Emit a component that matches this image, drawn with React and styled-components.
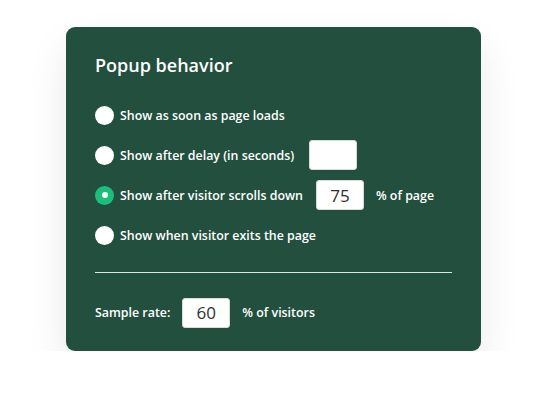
import React from "react";
import styled, { createGlobalStyle } from "styled-components";

const GlobalStyle = createGlobalStyle`
  body {
    margin: 0;
    background: #ffffff;
    font-family: "Open Sans", "Liberation Sans", sans-serif;
  }
`;

const Page = styled.div`
  padding: 27px 0 0 66px;
`;

const Card = styled.div`
  width: 415px;
  box-sizing: border-box;
  padding: 26px 29px 23px;
  background: #224f3e;
  border-radius: 9px;
  color: #ffffff;
  box-shadow: 0 20px 40px rgba(0, 0, 0, 0.09);
`;

const Title = styled.h2`
  margin: 0 0 23px;
  font-size: 18px;
  line-height: 24px;
  font-weight: 600;
`;

const Options = styled.div`
  display: flex;
  flex-direction: column;
  gap: 10px;
`;

const Option = styled.label`
  display: flex;
  align-items: center;
  height: 30px;
  font-size: 12.4px;
  font-weight: 600;
`;

const Radio = styled.span`
  width: 19px;
  height: 19px;
  border-radius: 50%;
  background: ${(p) => (p.$checked ? "#1bbf7a" : "#ffffff")};
  display: flex;
  align-items: center;
  justify-content: center;
  margin-right: 6px;
  flex-shrink: 0;

  &::after {
    content: "";
    display: ${(p) => (p.$checked ? "block" : "none")};
    width: 6px;
    height: 6px;
    border-radius: 50%;
    background: #ffffff;
  }
`;

const NumberBox = styled.div`
  width: 48px;
  height: 30px;
  box-sizing: border-box;
  margin-left: ${(p) => p.$gap || 12}px;
  margin-right: 12px;
  background: #ffffff;
  border: 1px solid #d6dcd9;
  border-radius: 3px;
  color: #2b2f33;
  font-size: 17px;
  font-weight: 400;
  display: flex;
  align-items: center;
  justify-content: center;
`;

const Divider = styled.hr`
  margin: 22px 0 24px;
  border: none;
  border-top: 1px solid rgba(255, 255, 255, 0.85);
`;

const SampleRow = styled.div`
  display: flex;
  align-items: center;
  height: 31px;
  font-size: 12.4px;
  font-weight: 600;
`;

const options = [
  { label: "Show as soon as page loads" },
  { label: "Show after delay (in seconds)", box: "", gap: 15 },
  { label: "Show after visitor scrolls down", box: "75", gap: 13, suffix: "% of page", checked: true },
  { label: "Show when visitor exits the page" },
];

export default function App() {
  return (
    <Page>
      <GlobalStyle />
      <Card>
        <Title>Popup behavior</Title>
        <Options>
          {options.map((o) => (
            <Option key={o.label}>
              <Radio $checked={o.checked} />
              {o.label}
              {o.box !== undefined && <NumberBox $gap={o.gap}>{o.box}</NumberBox>}
              {o.suffix}
            </Option>
          ))}
        </Options>
        <Divider />
        <SampleRow>
          Sample rate:
          <NumberBox $gap={12}>60</NumberBox>
          % of visitors
        </SampleRow>
      </Card>
    </Page>
  );
}
